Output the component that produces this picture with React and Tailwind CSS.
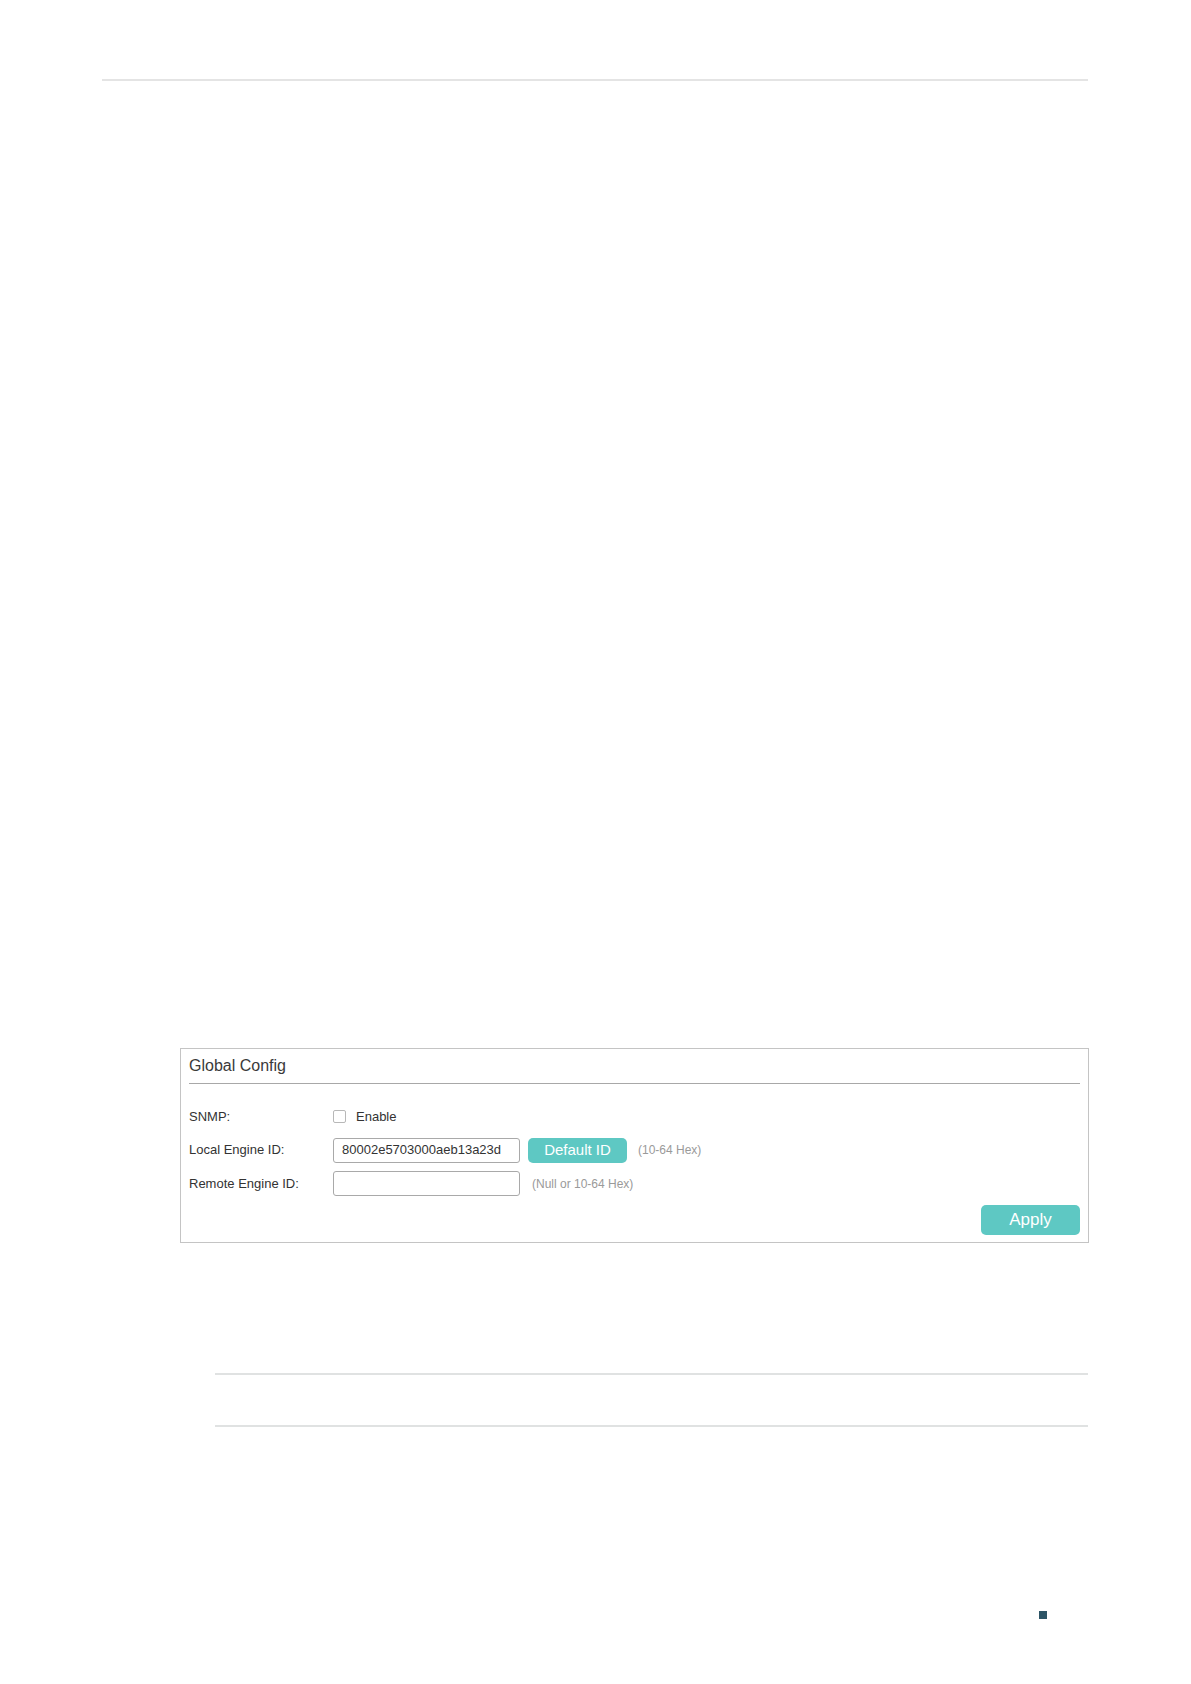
export default function App() {
  const font = { fontFamily: '"Liberation Sans", Arial, sans-serif' };
  return (
    <div className="w-full h-[1684px] bg-white" style={font}>
      <div className="pt-[79px]">
        <div className="ml-[102px] w-[986px] h-[2px] bg-[#e4e4e4]" />
      </div>

      <div className="ml-[180px] mt-[967px] w-[909px] h-[195px] border border-[#c4c4c4] px-[8px] pt-[7px] flex flex-col">
        <div className="h-[20px] leading-[20px] text-[16px] text-[#3a3a3a]">Global Config</div>
        <div className="mt-[7px] h-px bg-[#a8a8a8]" />

        <div className="mt-[20px] flex flex-col gap-[8.5px] text-[13px] text-[#333]">
          <div className="h-[25px] flex items-center">
            <div className="w-[144px]">SNMP:</div>
            <div className="w-[13px] h-[13px] rounded-[2px] border border-[#b8b8b8] bg-white" />
            <div className="ml-[10px]">Enable</div>
          </div>
          <div className="h-[25px] flex items-center">
            <div className="w-[144px]">Local Engine ID:</div>
            <div className="w-[187px] h-[25px] rounded-[3px] border border-[#a9a9a9] flex items-center pl-[8px]">
              80002e5703000aeb13a23d
            </div>
            <div className="ml-[8px] w-[99px] h-[25px] rounded-[5px] bg-[#5ec8c3] text-white text-[15px] flex items-center justify-center">
              Default ID
            </div>
            <div className="ml-[11px] text-[12px] text-[#9a9a9a]">(10-64 Hex)</div>
          </div>
          <div className="h-[25px] flex items-center">
            <div className="w-[144px]">Remote Engine ID:</div>
            <div className="w-[187px] h-[25px] rounded-[3px] border border-[#a9a9a9]" />
            <div className="ml-[12px] text-[12px] text-[#9a9a9a]">(Null or 10-64 Hex)</div>
          </div>
        </div>

        <div className="mt-[9px] flex justify-end">
          <div className="w-[99px] h-[30px] rounded-[5px] bg-[#5ec8c3] text-white text-[17px] flex items-center justify-center">
            Apply
          </div>
        </div>
      </div>

      <div className="ml-[215px] mt-[130px] w-[873px] h-[2px] bg-[#e0e2e2]" />
      <div className="ml-[215px] mt-[50px] w-[873px] h-[2px] bg-[#e0e2e2]" />

      <div className="ml-[1039px] mt-[184px] w-[8px] h-[8px] bg-[#2d5566]" />
    </div>
  );
}
